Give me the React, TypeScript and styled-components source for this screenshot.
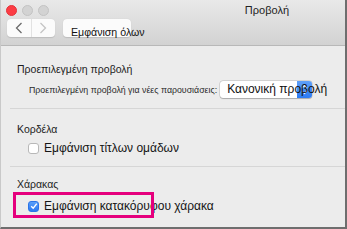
import styled, { createGlobalStyle } from "styled-components";

const GlobalStyle = createGlobalStyle`
  html, body {
    margin: 0;
    padding: 0;
    background: #ececec;
  }
  body {
    font-family: "Liberation Sans", "Noto Sans", Arial, sans-serif;
    color: #1a1a1a;
  }
`;

const Window = styled.div`
  width: 347px;
  height: 229px;
  box-sizing: border-box;
  border-right: 2px solid #6e6e6e;
  border-bottom: 2px solid #6e6e6e;
  border-left: 1px solid #c9c9c9;
  background: #ececec;
  overflow: hidden;
  display: flex;
  flex-direction: column;
`;

const TitleBar = styled.div`
  height: 46px;
  box-sizing: border-box;
  background: linear-gradient(#e9e9e9, #d2d2d2);
  border-bottom: 1px solid #b8b8b8;
  display: grid;
  grid-template-rows: 19px 18px;
  padding: 0 0 0 5px;
`;

const TopRow = styled.div`
  display: flex;
  align-items: center;
  gap: 5px;
  padding-top: 1px;
`;

const Light = styled.span<{ $red?: boolean }>`
  width: 11px;
  height: 11px;
  border-radius: 50%;
  box-sizing: border-box;
  background: ${(p) => (p.$red ? "#fc3c44" : "#d3d3d3")};
  border: 1px solid ${(p) => (p.$red ? "#e4333a" : "#c3c3c3")};
`;

const Title = styled.div`
  flex: 1;
  text-align: right;
  padding-right: 56px;
  font-size: 11px;
  color: #222;
`;

const ToolRow = styled.div`
  display: flex;
  align-items: stretch;
  gap: 8px;
  padding-left: 1px;
`;

const NavGroup = styled.div`
  display: flex;
  width: 48px;
  background: #fbfbfb;
  border-radius: 4px;
  box-shadow: 0 0.5px 1px rgba(0, 0, 0, 0.12);
`;

const NavButton = styled.div<{ $dim?: boolean }>`
  flex: 1;
  display: flex;
  align-items: center;
  justify-content: center;
  color: ${(p) => (p.$dim ? "#c4c4c4" : "#6a6a6a")};
  & + & {
    border-left: 1px solid #e2e2e2;
  }
`;

const ShowAll = styled.div`
  width: 68px;
  background: #fbfbfb;
  border-radius: 4px;
  box-shadow: 0 0.5px 1px rgba(0, 0, 0, 0.12);
  font-size: 10.6px;
  color: #111;
  white-space: nowrap;
  padding: 7px 0 0 8px;
  box-sizing: border-box;
  line-height: 12px;
`;

const Content = styled.div`
  display: flex;
  flex-direction: column;
`;

const Section = styled.div<{ $pt: number; $gap: number; $pb: number }>`
  display: flex;
  flex-direction: column;
  gap: ${(p) => p.$gap}px;
  padding: ${(p) => p.$pt}px 0 ${(p) => p.$pb}px 16px;
`;

const Separator = styled.div`
  height: 1px;
  margin-left: 9px;
  background: #d6d6d6;
`;

const Heading = styled.div`
  font-size: 10.5px;
  line-height: 14px;
  color: #1d1d1d;
`;

const PopupRow = styled.div`
  display: flex;
  align-items: center;
  gap: 3px;
  padding-left: 12px;
`;

const RowLabel = styled.span`
  font-size: 8.8px;
  color: #2a2a2a;
  white-space: nowrap;
`;

const Popup = styled.div`
  width: 92px;
  height: 17px;
  display: flex;
  background: #fff;
  border-radius: 3px;
  box-shadow: 0 0 0 0.5px rgba(0, 0, 0, 0.18), 0 0.5px 1px rgba(0, 0, 0, 0.2);
  position: relative;
`;

const PopupText = styled.span`
  font-size: 12px;
  line-height: 17px;
  padding-left: 7px;
  white-space: nowrap;
  color: #111;
  position: relative;
  z-index: 1;
`;

const PopupArrow = styled.div`
  position: absolute;
  right: 0;
  top: 0;
  bottom: 0;
  width: 15px;
  border-radius: 0 3px 3px 0;
  background: linear-gradient(#5fa0f8, #2c7af2);
  display: flex;
  align-items: center;
  justify-content: center;
`;

const CheckRow = styled.label`
  display: flex;
  align-items: center;
  gap: 5px;
  padding-left: 11px;
  position: relative;
`;

const Box = styled.span<{ $on?: boolean }>`
  width: 11px;
  height: 11px;
  box-sizing: border-box;
  border-radius: 3px;
  background: ${(p) => (p.$on ? "linear-gradient(#5a9ff9, #2b78f1)" : "#fff")};
  border: 1px solid ${(p) => (p.$on ? "#2b74e8" : "#b8b8b8")};
  display: flex;
  align-items: center;
  justify-content: center;
`;

const CheckText = styled.span`
  font-size: 12px;
  line-height: 14px;
  color: #151515;
  white-space: nowrap;
`;

const Highlight = styled.div`
  position: absolute;
  left: -4px;
  top: -7px;
  width: 141px;
  height: 26px;
  box-sizing: border-box;
  border: 3px solid #e5007d;
  pointer-events: none;
`;

export default function App() {
  return (
    <>
      <GlobalStyle />
      <Window>
        <TitleBar>
          <TopRow>
            <Light $red />
            <Light />
            <Light />
            <Title>Προβολή</Title>
          </TopRow>
          <ToolRow>
            <NavGroup>
              <NavButton>
                <svg width="8" height="12" viewBox="0 0 8 12">
                  <path d="M6.5 1 L1.5 6 L6.5 11" fill="none" stroke="currentColor" strokeWidth="1.3" />
                </svg>
              </NavButton>
              <NavButton $dim>
                <svg width="8" height="12" viewBox="0 0 8 12">
                  <path d="M1.5 1 L6.5 6 L1.5 11" fill="none" stroke="currentColor" strokeWidth="1.3" />
                </svg>
              </NavButton>
            </NavGroup>
            <ShowAll>Εμφάνιση όλων</ShowAll>
          </ToolRow>
        </TitleBar>
        <Content>
          <Section $pt={16} $gap={5} $pb={10}>
            <Heading>Προεπιλεγμένη προβολή</Heading>
            <PopupRow>
              <RowLabel>Προεπιλεγμένη προβολή για νέες παρουσιάσεις:</RowLabel>
              <Popup>
                <PopupArrow>
                  <svg width="7" height="11" viewBox="0 0 7 11">
                    <path d="M1 4 L3.5 1.5 L6 4 M1 7 L3.5 9.5 L6 7" fill="none" stroke="#fff" strokeWidth="1.1" />
                  </svg>
                </PopupArrow>
                <PopupText>Κανονική προβολή</PopupText>
              </Popup>
            </PopupRow>
          </Section>
          <Separator />
          <Section $pt={13} $gap={5} $pb={11}>
            <Heading>Κορδέλα</Heading>
            <CheckRow>
              <Box />
              <CheckText>Εμφάνιση τίτλων ομάδων</CheckText>
            </CheckRow>
          </Section>
          <Separator />
          <Section $pt={10} $gap={8} $pb={0}>
            <Heading>Χάρακας</Heading>
            <CheckRow>
              <Box $on>
                <svg width="8" height="8" viewBox="0 0 8 8">
                  <path d="M1.2 4.2 L3.2 6.2 L6.8 1.6" fill="none" stroke="#fff" strokeWidth="1.4" />
                </svg>
              </Box>
              <CheckText>Εμφάνιση κατακόρυφου χάρακα</CheckText>
              <Highlight />
            </CheckRow>
          </Section>
        </Content>
      </Window>
    </>
  );
}
